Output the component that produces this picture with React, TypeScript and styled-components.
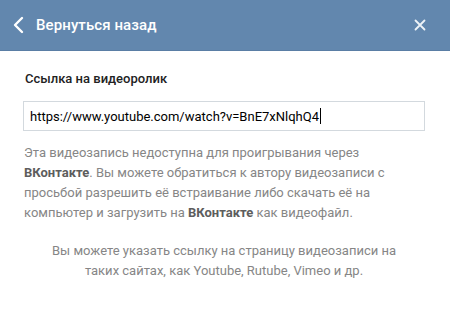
import styled, { createGlobalStyle } from 'styled-components';

const GlobalStyle = createGlobalStyle`
	html, body {
		margin: 0;
		padding: 0;
		background: #fff;
	}
	body {
		font-family: Roboto, 'Noto Sans', sans-serif;
		-webkit-font-smoothing: antialiased;
	}
`;

const Box = styled.div`
	width: 450px;
	height: 326px;
	background: #fff;
	overflow: hidden;
`;

const Header = styled.div`
	display: flex;
	align-items: center;
	height: 51px;
	padding: 0 14px 0 12px;
	background: #6287ae;
	border-bottom: 1px solid #5a7ea5;
	box-sizing: border-box;
	color: #fff;
`;

const BackButton = styled.div`
	display: flex;
	align-items: center;
	gap: 12px;
	flex: 1;
	font-size: 15px;
	font-weight: 500;
	letter-spacing: 0.1px;
`;

const CloseButton = styled.div`
	display: flex;
	align-items: center;
	justify-content: center;
	width: 24px;
	height: 24px;
	margin-right: 4px;
`;

const Body = styled.div`
	padding: 20px 25px 0 23px;
`;

const Label = styled.div`
	font-size: 13px;
	font-weight: 500;
	color: #222;
	padding-left: 2px;
	line-height: 16px;
	margin-bottom: 14px;
`;

const UrlInput = styled.div`
	display: flex;
	align-items: center;
	height: 30px;
	box-sizing: border-box;
	border: 1px solid #d3d9de;
	padding: 0 6px;
	font-size: 13px;
	color: #000;
`;

const Caret = styled.span`
	display: inline-block;
	width: 1px;
	height: 16px;
	background: #000;
	margin-left: 1px;
`;

const Note = styled.p<{ $center?: boolean }>`
	margin: ${ p => p.$center ? '18px 12px 0' : '12px 0 0 1px' };
	font-size: 13px;
	line-height: 20px;
	color: #868686;
	text-align: ${ p => p.$center ? 'center' : 'left' };

	b {
		font-weight: 700;
		color: #5d5d5d;
	}
`;

export default function App() {
	return (
		<Box>
			<GlobalStyle />
			<Header>
				<BackButton>
					<svg width="12" height="18" viewBox="0 0 12 18">
						<path d="M10 2 L3 9 L10 16" fill="none" stroke="#fff" strokeWidth="2.4" strokeLinecap="round" strokeLinejoin="round" />
					</svg>
					{ 'Вернуться назад' }
				</BackButton>
				<CloseButton>
					<svg width="12" height="12" viewBox="0 0 12 12">
						<path d="M1.5 1.5 L10.5 10.5 M10.5 1.5 L1.5 10.5" stroke="#eef3f8" strokeWidth="1.8" strokeLinecap="round" />
					</svg>
				</CloseButton>
			</Header>
			<Body>
				<Label>{ 'Ссылка на видеоролик' }</Label>
				<UrlInput>
					{ 'https://www.youtube.com/watch?v=BnE7xNlqhQ4' }
					<Caret />
				</UrlInput>
				<Note>
					{ 'Эта видеозапись недоступна для проигрывания через ' }
					<b>{ 'ВКонтакте' }</b>
					{ '. Вы можете обратиться к автору видеозаписи с просьбой разрешить её встраивание либо скачать её на компьютер и загрузить на ' }
					<b>{ 'ВКонтакте' }</b>
					{ ' как видеофайл.' }
				</Note>
				<Note $center>
					{ 'Вы можете указать ссылку на страницу видеозаписи на таких сайтах, как Youtube, Rutube, Vimeo и др.' }
				</Note>
			</Body>
		</Box>
	);
}
